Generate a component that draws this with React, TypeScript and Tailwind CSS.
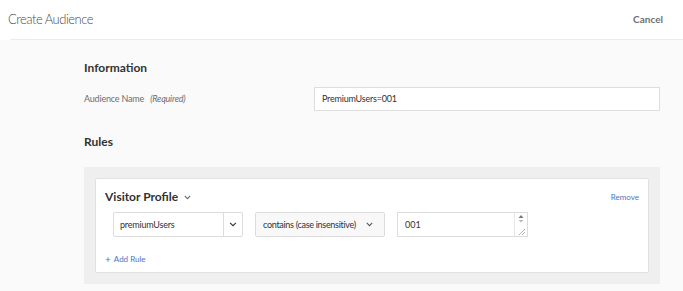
import React from "react";

function Chevron({ className = "", w = 9, h = 6 }: { className?: string; w?: number; h?: number }) {
  return (
    <svg width={w} height={h} viewBox="0 0 9 6" className={className}>
      <path d="M1 1 L4.5 4.5 L8 1" fill="none" stroke="currentColor" strokeWidth="1.3" />
    </svg>
  );
}

export default function App() {
  return (
    <div className="h-[291px] w-full overflow-hidden bg-[#fafafa] font-['Lato',sans-serif]">
      <div className="bg-white">
        <div className="flex h-[39px] items-center justify-between pl-[8px] pr-[20px]">
          <span className="text-[13px] font-light tracking-[-0.5px] text-[#4b4b4b]">Create Audience</span>
          <span className="text-[10px] font-bold text-[#707070]">Cancel</span>
        </div>
        <div className="ml-[10px] h-px bg-[#ececec]" />
      </div>

      <div className="pl-[84px] pr-[23px]">
        <div className="mt-[20px] text-[12px] font-bold leading-[16px] text-[#323232]">Information</div>

        <div className="mt-[11px] flex h-[24px] items-center">
          <div className="w-[230px] text-[9px] tracking-[-0.2px] text-[#6e6e6e]">
            Audience Name <span className="ml-[4px] italic">(Required)</span>
          </div>
          <div className="flex h-[24px] flex-1 items-center border border-[#dedede] bg-white pl-[7px] text-[9px] tracking-[-0.2px] text-[#323232]">
            PremiumUsers=001
          </div>
        </div>

        <div className="mt-[23px] text-[12px] font-bold leading-[16px] text-[#323232]">Rules</div>

        <div className="mt-[17px] h-[117px] bg-[#efefef] p-[11px]">
          <div className="h-[95px] rounded-[2px] border border-[#e1e1e1] bg-white px-[9px] pt-[10px]">
            <div className="flex items-center justify-between">
              <div className="flex items-center gap-[6px] text-[12px] font-bold leading-[16px] text-[#323232]">
                Visitor Profile
                <Chevron className="mt-[1px] text-[#666]" w={7} h={5} />
              </div>
              <span className="text-[8px] text-[#4b75c4]">Remove</span>
            </div>

            <div className="ml-[8px] mt-[7px] flex h-[25px] gap-[12px]">
              <div className="flex w-[130px] rounded-[2px] border border-[#dcdcdc] bg-white">
                <div className="flex flex-1 items-center whitespace-nowrap pl-[6px] text-[9px] tracking-[-0.2px] text-[#323232]">premiumUsers</div>
                <div className="flex w-[19px] items-center justify-center border-l border-[#dcdcdc] text-[#333]">
                  <Chevron w={8} h={5} />
                </div>
              </div>
              <div className="flex w-[130px] items-center justify-between whitespace-nowrap rounded-[2px] border border-[#dcdcdc] bg-[#f8f8f8] pl-[7px] pr-[11px] text-[9px] tracking-[-0.3px] text-[#323232]">
                contains (case insensitive)
                <Chevron className="text-[#555]" w={7} h={5} />
              </div>
              <div className="relative flex w-[131px] items-center border border-[#dcdcdc] bg-white pl-[7px] text-[9px] text-[#323232]">
                001
                <div className="absolute right-0 top-0 flex h-full w-[13px] flex-col border-l border-[#e6e6e6]">
                  <svg width="12" height="12" viewBox="0 0 12 12" className="text-[#777]">
                    <path d="M6 2 L8.5 5 L3.5 5 Z" fill="currentColor" />
                    <path d="M6 9.5 L8.5 7 L3.5 7 Z" fill="#bbb" />
                  </svg>
                  <svg width="12" height="11" viewBox="0 0 12 11" className="mt-auto">
                    <path d="M4 10 L10 4 M7 10 L10 7" stroke="#999" strokeWidth="0.8" />
                  </svg>
                </div>
              </div>
            </div>

            <div className="mt-[16px] flex items-center gap-[3px] text-[8px] text-[#4b75c4]">
              <span className="text-[10px] leading-none">+</span> Add Rule
            </div>
          </div>
        </div>
      </div>
    </div>
  );
}
